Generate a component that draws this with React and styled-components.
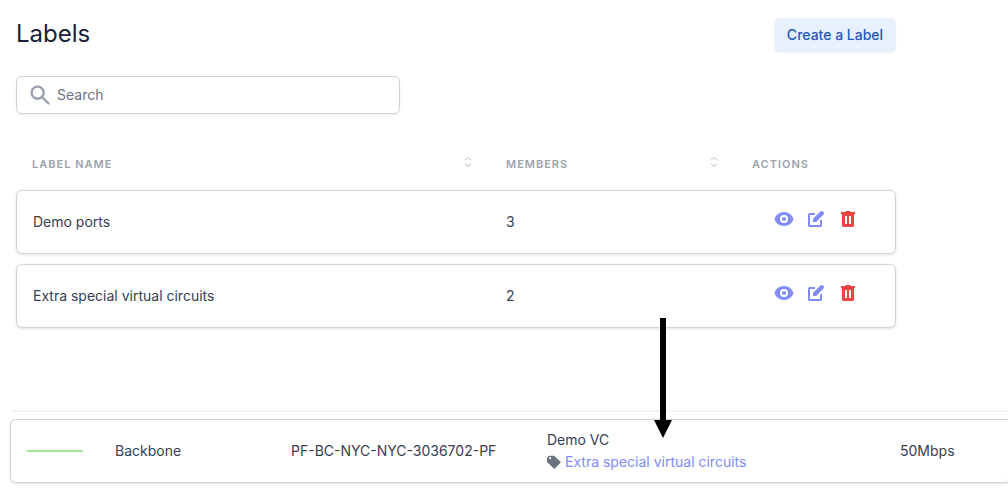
import React from "react";
import styled, { createGlobalStyle } from "styled-components";
import { HiEye, HiSearch } from "react-icons/hi";

const GlobalStyle = createGlobalStyle`
  * {
    box-sizing: border-box;
  }
  body {
    margin: 0;
    background: #fff;
    color: #374151;
    font-family: Inter, "Liberation Sans", sans-serif;
    font-size: 14px;
    line-height: 20px;
    overflow-x: hidden;
  }
`;
const LabelsPage = styled.main`
  max-width: 912px;
  padding: 16px 16px 0;
`;
const Header = styled.header`
  display: flex;
  align-items: flex-end;
  justify-content: space-between;
  height: 36px;
`;
const Title = styled.h1`
  margin: 0;
  color: #1a2138;
  font-size: 24px;
  font-weight: 400;
  line-height: 36px;
`;
const CreateButton = styled.button`
  min-width: 122px;
  height: 34px;
  padding: 0 12px;
  border: 0;
  border-radius: 6px;
  background: #e8f0fe;
  box-shadow: 0 1px 2px rgba(0, 0, 0, 0.06);
  color: #2457b8;
  font: inherit;
  font-weight: 500;
  white-space: nowrap;
  cursor: pointer;
`;
const SearchBox = styled.label`
  display: flex;
  align-items: center;
  gap: 5px;
  max-width: 384px;
  height: 38px;
  margin-top: 24px;
  padding: 0 11px;
  border: 1px solid #d1d5db;
  border-radius: 6px;
  box-shadow: 0 1px 2px rgba(0, 0, 0, 0.08);
  color: #9ca3af;
`;
const SearchInput = styled.input`
  flex: 1;
  min-width: 0;
  padding: 0;
  border: 0;
  outline: none;
  background: transparent;
  color: #374151;
  font: inherit;
  &::placeholder {
    color: #6b7280;
    opacity: 1;
  }
`;
const Table = styled.table`
  width: 100%;
  table-layout: fixed;
  border-collapse: separate;
  border-spacing: 0 10px;
`;
const LabelsTable = styled(Table)`
  margin-top: 24px;
`;
const Col = styled.col`
  width: ${props => (props.$width ? `${props.$width}px` : "auto")};
`;
const HeadCell = styled.th`
  height: 32px;
  padding: 0 16px;
  text-align: left;
  color: #9ca3af;
  font-size: 11px;
  font-weight: 600;
  letter-spacing: 1px;
  text-transform: uppercase;
`;
const HeadContent = styled.div`
  display: flex;
  align-items: center;
  justify-content: space-between;
`;
const SortButton = styled.button`
  display: flex;
  padding: 0 0 4px;
  border: 0;
  background: transparent;
  color: #d1d5db;
  cursor: pointer;
`;
const Row = styled.tr`
  border-radius: 6px;
  box-shadow: 0 1px 3px rgba(0, 0, 0, 0.12);
`;
const Cell = styled.td`
  height: 64px;
  padding: 0 16px;
  border: 1px solid #d1d5db;
  border-width: 1px 0;
  &:first-child {
    border-left-width: 1px;
    border-radius: 6px 0 0 6px;
  }
  &:last-child {
    border-right-width: ${props => (props.$open ? 0 : 1)}px;
    border-radius: ${props => (props.$open ? "0" : "0 6px 6px 0")};
  }
`;
const Actions = styled.div`
  display: flex;
  justify-content: center;
  gap: 12px;
  padding-bottom: 6px;
`;
const IconButton = styled.button`
  display: flex;
  padding: 0;
  border: 0;
  background: transparent;
  color: ${props => (props.$danger ? "#ef4444" : "#818cf8")};
  cursor: pointer;
`;
const Circuits = styled.section`
  margin-top: 72px;
  padding-left: 10px;
`;
const Divider = styled.hr`
  height: 2px;
  margin: 0 0 -3px 2px;
  border: 0;
  background: #f3f4f6;
`;
const StatusLine = styled.div`
  height: 2px;
  background: #a3e693;
`;
const CircuitName = styled.div`
  position: relative;
  line-height: 22px;
`;
const LabelLink = styled.a`
  display: flex;
  align-items: center;
  gap: 4px;
  color: #818cf8;
  text-decoration: none;
  white-space: nowrap;
  svg {
    color: #6b7280;
  }
`;
const Arrow = styled.svg`
  position: absolute;
  left: 107px;
  bottom: 35px;
`;

const SortIcon = () => (
  <svg width="12" height="12" viewBox="0 0 12 12" fill="none" stroke="currentColor" strokeWidth="1.3">
    <path d="M3 4.2 6 1.6l3 2.6M3 7.8l3 2.6 3-2.6" />
  </svg>
);

const EditIcon = () => (
  <svg width="20" height="20" viewBox="0 0 20 20" fill="currentColor">
    <path d="M3.6 4H9v2H4v10h10v-5h2v5.4a1.6 1.6 0 0 1-1.6 1.6H3.6A1.6 1.6 0 0 1 2 16.4V5.6A1.6 1.6 0 0 1 3.6 4z" />
    <path d="M7 9.8 14.4 2.5a2.2 2.2 0 0 1 3.1 3.1L10.2 13H7z" />
  </svg>
);

const TrashIcon = () => (
  <svg width="20" height="20" viewBox="0 0 20 20" fill="currentColor">
    <path d="M7 3l1-1h4l1 1h4v2H3V3z" />
    <path
      fillRule="evenodd"
      d="M4 5h12v11.4a1.6 1.6 0 0 1-1.6 1.6H5.6A1.6 1.6 0 0 1 4 16.4zM7 7v8h2V7zm4 0v8h2V7z"
    />
  </svg>
);

const TagIcon = () => (
  <svg width="14" height="14" viewBox="0 0 20 20" fill="currentColor">
    <path
      fillRule="evenodd"
      d="M0 10V4l3-3h7l10 9.5-9.5 9.5zM4.5 6a1.5 1.5 0 1 0 0-3 1.5 1.5 0 0 0 0 3z"
    />
  </svg>
);

const labels = [
  { name: "Demo ports", members: 3 },
  { name: "Extra special virtual circuits", members: 2 }
];

export default function App() {
  return (
    <>
      <GlobalStyle />
      <LabelsPage>
        <Header>
          <Title>Labels</Title>
          <CreateButton type="button">Create a Label</CreateButton>
        </Header>
        <SearchBox>
          <HiSearch size={24} />
          <SearchInput type="text" placeholder="Search" aria-label="Search" />
        </SearchBox>
        <LabelsTable>
          <colgroup>
            <Col />
            <Col $width={246} />
            <Col $width={160} />
          </colgroup>
          <thead>
            <tr>
              {["Label name", "Members"].map(title => (
                <HeadCell key={title}>
                  <HeadContent>
                    {title}
                    <SortButton type="button" aria-label={`Sort by ${title}`}>
                      <SortIcon />
                    </SortButton>
                  </HeadContent>
                </HeadCell>
              ))}
              <HeadCell>Actions</HeadCell>
            </tr>
          </thead>
          <tbody>
            {labels.map(({ name, members }) => (
              <Row key={name}>
                <Cell>{name}</Cell>
                <Cell>{members}</Cell>
                <Cell>
                  <Actions>
                    <IconButton type="button" aria-label={`View ${name}`}>
                      <HiEye size={20} />
                    </IconButton>
                    <IconButton type="button" aria-label={`Edit ${name}`}>
                      <EditIcon />
                    </IconButton>
                    <IconButton type="button" $danger aria-label={`Delete ${name}`}>
                      <TrashIcon />
                    </IconButton>
                  </Actions>
                </Cell>
              </Row>
            ))}
          </tbody>
        </LabelsTable>
      </LabelsPage>
      <Circuits>
        <Divider />
        <Table>
          <colgroup>
            <Col $width={89} />
            <Col $width={176} />
            <Col $width={256} />
            <Col $width={353} />
            <Col />
          </colgroup>
          <tbody>
            <Row>
              <Cell>
                <StatusLine />
              </Cell>
              <Cell>Backbone</Cell>
              <Cell>PF-BC-NYC-NYC-3036702-PF</Cell>
              <Cell>
                <CircuitName>
                  Demo VC
                  <LabelLink href="#label">
                    <TagIcon />
                    Extra special virtual circuits
                  </LabelLink>
                  <Arrow width="18" height="120" viewBox="0 0 18 120">
                    <path d="M6 0h6v102h6L9 120 0 102h6z" />
                  </Arrow>
                </CircuitName>
              </Cell>
              <Cell $open>50Mbps</Cell>
            </Row>
          </tbody>
        </Table>
      </Circuits>
    </>
  );
}
